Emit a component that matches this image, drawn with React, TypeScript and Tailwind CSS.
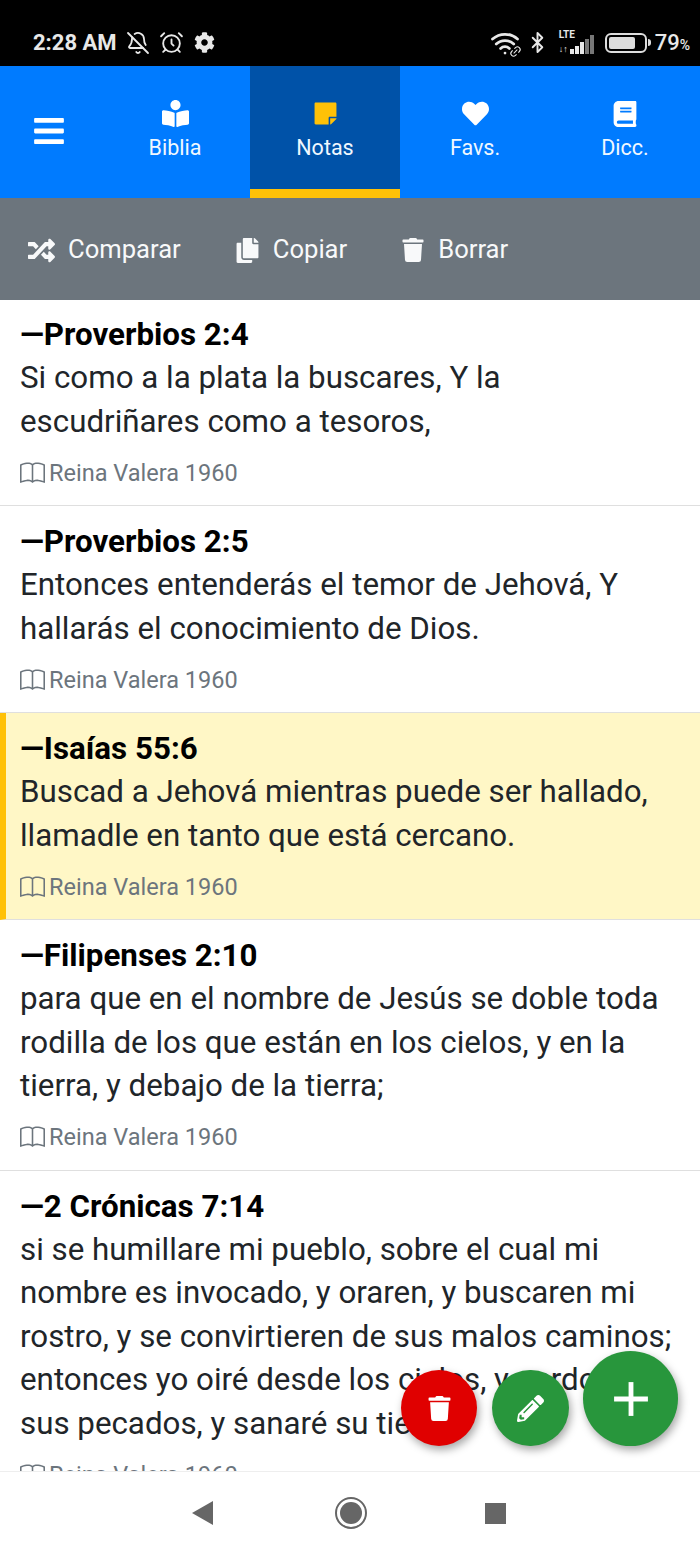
import { FC } from 'react';
import { FaBars, FaBook, FaBookReader, FaCog, FaCopy, FaHeart, FaPencilAlt, FaRandom, FaStickyNote, FaTrash } from 'react-icons/fa';
import { BsBook } from 'react-icons/bs';
import { AlarmClock, BellOff, Bluetooth, Link2, Plus, Wifi } from 'lucide-react';

const NOTES = [
  {
    ref: 'Proverbios 2:4',
    text: ['Si como a la plata la buscares, Y la', 'escudriñares como a tesoros,'],
  },
  {
    ref: 'Proverbios 2:5',
    text: ['Entonces entenderás el temor de Jehová, Y', 'hallarás el conocimiento de Dios.'],
  },
  {
    ref: 'Isaías 55:6',
    text: ['Buscad a Jehová mientras puede ser hallado,', 'llamadle en tanto que está cercano.'],
    selected: true,
  },
  {
    ref: 'Filipenses 2:10',
    text: [
      'para que en el nombre de Jesús se doble toda',
      'rodilla de los que están en los cielos, y en la',
      'tierra, y debajo de la tierra;',
    ],
  },
  {
    ref: '2 Crónicas 7:14',
    text: [
      'si se humillare mi pueblo, sobre el cual mi',
      'nombre es invocado, y oraren, y buscaren mi',
      'rostro, y se convirtieren de sus malos caminos;',
      'entonces yo oiré desde los cielos, y perdonaré',
      'sus pecados, y sanaré su tierra.',
    ],
  },
];

const StatusBar: FC = () => (
  <div className="h-[66px] shrink-0 bg-black text-[#e8e8e8] flex items-center pt-[19px] pl-[33px] pr-[10px]">
    <span className="text-[22px] font-bold leading-none">2:28 AM</span>
    <BellOff size={24} strokeWidth={1.8} className="ml-[9px]" />
    <AlarmClock size={25} strokeWidth={1.8} className="ml-[9px]" />
    <FaCog size={21} className="ml-[10px]" />
    <div className="ml-auto flex items-center">
      <div className="relative">
        <Wifi size={30} strokeWidth={2.2} />
        <Link2 size={13} strokeWidth={2} className="absolute right-[-2px] bottom-0 -rotate-45" />
      </div>
      <Bluetooth size={23} strokeWidth={2} className="ml-[6px]" />
      <div className="ml-[10px] relative w-[36px] h-[22px]">
        <span className="absolute left-0 top-[-2px] text-[10px] font-bold leading-none">LTE</span>
        <span className="absolute left-0 bottom-0 text-[9px] font-bold leading-none">↓↑</span>
        <div className="absolute left-[11px] bottom-0 flex items-end gap-[1px]">
          <div className="w-[4px] h-[5px] bg-[#e8e8e8]" />
          <div className="w-[4px] h-[8px] bg-[#e8e8e8]" />
          <div className="w-[4px] h-[12px] bg-[#e8e8e8]" />
          <div className="w-[4px] h-[15px] bg-[#777]" />
          <div className="w-[4px] h-[19px] bg-[#777]" />
        </div>
      </div>
      <div className="ml-[10px] w-[42px] h-[20px] rounded-[6px] border-2 border-[#ddd] p-[2px]">
        <div className="h-full w-[78%] bg-[#ddd] rounded-[2px]" />
      </div>
      <div className="w-[3px] h-[7px] ml-[1px] bg-[#ddd] rounded-r-sm" />
      <span className="ml-[4px] text-[22px] font-medium leading-none">79</span>
      <span className="text-[14px] font-medium leading-none mt-[5px]">%</span>
    </div>
  </div>
);

const TabItem: FC<{ label: string; icon: React.ReactNode; active?: boolean }> = ({ label, icon, active }) => (
  <div
    className={`w-[150px] h-full flex flex-col items-center pt-[34px] border-b-[9px] ${
      active ? 'bg-[#0052a8] border-[#ffc107]' : 'border-transparent'
    }`}
  >
    <div className="h-[27px] flex items-center justify-center">{icon}</div>
    <span className="text-[21.5px] leading-[28px] mt-[7px] text-[#f0f8ff]">{label}</span>
  </div>
);

const NavTabs: FC = () => (
  <div className="h-[132px] shrink-0 bg-[#007bff] flex text-white">
    <div className="w-[100px] flex items-center justify-center pr-[2px] pb-[3px]">
      <FaBars size={34} />
    </div>
    <TabItem label="Biblia" icon={<FaBookReader size={27} />} />
    <TabItem label="Notas" icon={<FaStickyNote size={25} className="text-[#ffc107]" />} active />
    <TabItem label="Favs." icon={<FaHeart size={27} />} />
    <TabItem label="Dicc." icon={<FaBook size={26} />} />
  </div>
);

const ToolItem: FC<{ label: string; icon: React.ReactNode }> = ({ label, icon }) => (
  <div className="flex items-center gap-[13px]">
    {icon}
    <span className="text-[25.6px] leading-none">{label}</span>
  </div>
);

const Toolbar: FC = () => (
  <div className="relative z-10 h-[102px] shrink-0 bg-[#6c757d] text-[#f8f9fa] flex items-center pt-[2px] pl-[28px] gap-[54px]">
    <ToolItem label="Comparar" icon={<FaRandom size={27} />} />
    <ToolItem label="Copiar" icon={<FaCopy size={25} />} />
    <ToolItem label="Borrar" icon={<FaTrash size={24} />} />
  </div>
);

const NoteItem: FC<{ note: (typeof NOTES)[number] }> = ({ note }) => (
  <div
    className={`border-b border-[#dfdfdf] pt-[15px] pb-[15.5px] pr-[20px] ${
      note.selected ? 'bg-[#fff7c6] border-l-[6px] border-l-[#ffc107] pl-[14px]' : 'bg-white pl-[20px]'
    }`}
  >
    <div className="text-[31.3px] leading-[42px] font-bold text-black whitespace-nowrap">—{note.ref}</div>
    {note.text.map((line) => (
      <div key={line} className="text-[31.3px] leading-[43.5px] text-[#212529] whitespace-nowrap">
        {line}
      </div>
    ))}
    <div className="mt-[13.5px] flex items-center gap-[4px] text-[#6c757d] text-[23.5px] leading-[33px]">
      <BsBook size={25} />
      <span>Reina Valera 1960</span>
    </div>
  </div>
);

const AndroidNav: FC = () => (
  <div className="relative z-10 h-[85px] shrink-0 bg-white border-t border-[#eeeeee] flex items-center pb-[2px] pl-[192px]">
    <div className="w-0 h-0 border-y-[12px] border-y-transparent border-r-[21px] border-r-[#666]" />
    <div className="ml-[122px] w-[32px] h-[32px] rounded-full border-2 border-[#666] p-[3px]">
      <div className="w-full h-full rounded-full bg-[#666]" />
    </div>
    <div className="ml-[118px] w-[21px] h-[21px] bg-[#666]" />
  </div>
);

const App: FC = () => {
  return (
    <div className="relative w-[700px] h-[1556px] flex flex-col overflow-hidden bg-white font-['Roboto',sans-serif]">
      <StatusBar />
      <NavTabs />
      <Toolbar />
      <div className="flex-1 overflow-hidden -mt-px">
        {NOTES.map((note) => (
          <NoteItem key={note.ref} note={note} />
        ))}
      </div>
      <AndroidNav />

      <div className="absolute z-20 left-[401px] top-[1370px] w-[76px] h-[76px] rounded-full bg-[#e00000] text-white flex items-center justify-center shadow-[2px_4px_8px_rgba(0,0,0,0.35)]">
        <FaTrash size={25} />
      </div>
      <div className="absolute z-20 left-[492px] top-[1370px] w-[77px] h-[76px] rounded-full bg-[#28963c] text-white flex items-center justify-center shadow-[2px_4px_8px_rgba(0,0,0,0.35)]">
        <FaPencilAlt size={27} />
      </div>
      <div className="absolute z-20 left-[583px] top-[1351px] w-[95px] h-[95px] rounded-full bg-[#28963c] text-white flex items-center justify-center shadow-[2px_4px_8px_rgba(0,0,0,0.35)]">
        <Plus size={58} strokeWidth={2} strokeLinecap="butt" />
      </div>
    </div>
  );
};

export default App;
